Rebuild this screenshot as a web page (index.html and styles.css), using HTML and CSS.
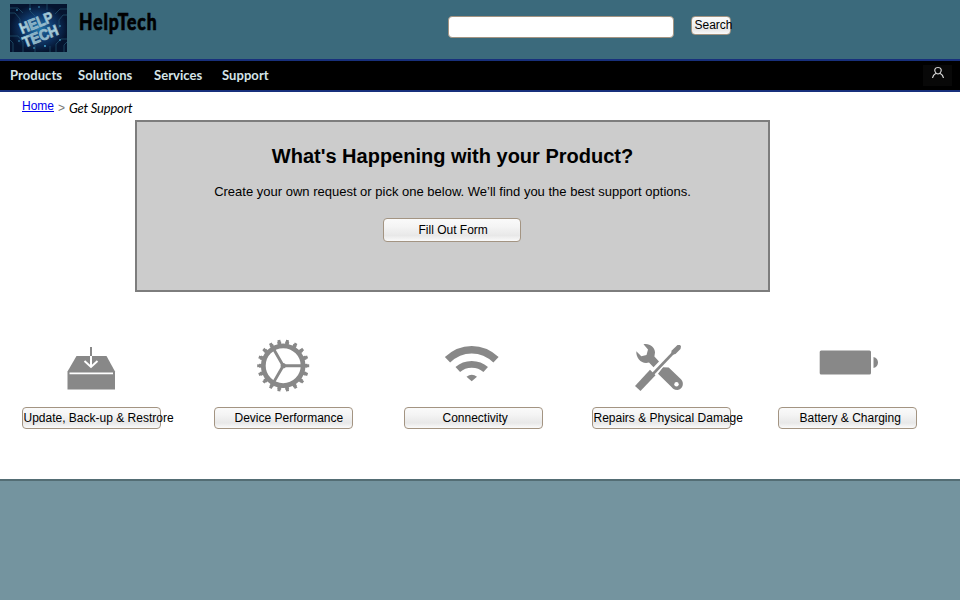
FILE: index.html
```html
<!DOCTYPE html>
<html lang="en">
<head>
<meta charset="utf-8">
<title>HelpTech - Get Support</title>
<link rel="stylesheet" href="styles.css">
</head>
<body>
<header class="header">
  <svg class="logo" viewBox="0 0 57 48">
    <defs>
      <radialGradient id="glow"><stop offset="0" stop-color="#2379ad"/><stop offset=".5" stop-color="#103c70"/><stop offset="1" stop-color="#05142f"/></radialGradient>
      <linearGradient id="metal" x2="1" y2="0"><stop offset="0" stop-color="#d5eef3"/><stop offset=".35" stop-color="#7ba7bd"/><stop offset="1" stop-color="#b9dce8"/></linearGradient>
    </defs>
    <rect width="57" height="48" fill="url(#glow)"/>
    <g fill="none" stroke="#245674" stroke-width=".7">
      <path d="M0 4h8l5 5M0 9h5l5 6v8M0 32h8l5 6v10M3 48v-9l-3-3M57 5h-7l-5 5M57 11h-4l-4 5v8M57 35h-6l-5 5v8M54 48v-7l3-3M20 0v7l5 5M37 0v6M25 48v-7M40 48v-6"/>
    </g>
    <g fill="#4bb6df"><circle cx="7" cy="6" r=".8"/><circle cx="20" cy="5" r=".8"/><circle cx="35" cy="42" r=".9"/><circle cx="50" cy="36" r=".8"/><circle cx="50" cy="22" r=".8"/><circle cx="9" cy="37" r=".7"/><circle cx="24" cy="44" r=".8"/><circle cx="29" cy="3" r=".7"/></g>
    <g class="logo-text" fill="url(#metal)" stroke="#8fb6c8" stroke-width=".9">
      <text x="0" y="0" textLength="35" lengthAdjust="spacingAndGlyphs" transform="translate(12 30) rotate(-22)">HELP</text>
      <text x="0" y="0" textLength="37" lengthAdjust="spacingAndGlyphs" transform="translate(15 43.500) rotate(-21)">TECH</text>
    </g>
  </svg>
  <div class="brand">HelpTech</div>
  <input class="search-input" type="text" aria-label="Search">
  <button class="button search-button">Search</button>
</header>
<nav class="nav">
  <a class="nav-link products">Products</a>
  <a class="nav-link solutions">Solutions</a>
  <a class="nav-link services">Services</a>
  <a class="nav-link support">Support</a>
  <div class="account"><svg viewBox="0 0 14 14" width="14" height="14"><path d="M1.500 12C2 9.500 3.400 8 5 7.200C2.400 4.400 4 1.500 7 1.500s4.600 2.900 2 5.700C10.600 8 12 9.500 12.500 12M5 7.200q2 1.300 4 0" fill="none" stroke="#d5d5d5" stroke-width="1.200"/></svg></div>
</nav>
<main class="main">
  <div class="breadcrumb"><a class="home" href="#">Home</a><span class="separator">&gt;</span><span class="current">Get Support</span></div>
  <section class="panel">
    <h1 class="title">What's Happening with your Product?</h1>
    <p class="intro">Create your own request or pick one below. We’ll find you the best support options.</p>
    <button class="button form-button">Fill Out Form</button>
  </section>
  <section class="topics">
    <div class="topic">
      <svg class="icon" viewBox="0 0 139 66"><path d="M54.500 26h30L93 41.500V59.500H45.500V41.500Z" fill="#888"/><path d="M69 17v9" stroke="#888" stroke-width="2"/><path d="M47.500 43.300H91" stroke="#fff" stroke-width="1.700"/><path d="M69 26v11M62.500 31l6.500 6 6.500-6" fill="none" stroke="#fff" stroke-width="2"/></svg>
      <button class="button update">Update, Back-up &amp; Restrore</button>
    </div>
    <div class="topic">
      <svg class="icon" viewBox="0 0 139 66"><g fill="none" stroke="#888"><circle cx="69.200" cy="35.700" r="19.900" stroke-width="4.800"/><circle cx="69.200" cy="35.700" r="22.700" stroke-width="3" pathLength="180" stroke-dasharray="4.800 5.200" stroke-dashoffset="2.400"/><circle cx="69.200" cy="35.700" r="24.600" stroke-width="2.800" pathLength="180" stroke-dasharray="3.400 6.600" stroke-dashoffset="1.700"/><path d="M69.200 35.700H89M69.200 35.700L59.300 18.500M69.200 35.700L59.300 52.900" stroke-width="2.900"/></g><circle cx="69.200" cy="35.700" r="2.600" fill="#888"/></svg>
      <button class="button device">Device Performance</button>
    </div>
    <div class="topic">
      <svg class="icon" viewBox="0 0 139 66"><g fill="none" stroke="#888"><path d="M43.500 29.800Q54 19.700 67.700 19.700T92 29.800" stroke-width="7.600"/><path d="M53.800 39.500Q59.500 34.300 67.700 34.300T81.700 39.500" stroke-width="6.800"/></g><path d="M62.500 46.800Q67.700 42.500 73 46.800L67.700 51.300Z" fill="#888"/></svg>
      <button class="button connectivity">Connectivity</button>
    </div>
    <div class="topic">
      <svg class="icon" viewBox="0 0 139 66"><path d="M51.500 14.200C57 12.700 63 17 63 22.500L62.400 26.500 67 31.500 61.500 37.200 57 32.500C50 34.500 44 29 44.300 21.300L49.300 26.200 54.500 25 56 19.400Z" fill="#888"/><path d="M71 37.200L76.700 37.500 89 49.200C92.500 52.500 91 59.500 85.500 60C82 60 80.500 58 79.500 57L66 43.700Z" fill="#888"/><circle cx="84.500" cy="54.300" r="2.200" fill="#fff"/><path d="M58 47L81 23" stroke="#fff" stroke-width="5"/><path d="M59 46L82 22" stroke="#888" stroke-width="2.600"/><path d="M79.500 20.800L85.500 15 88 15 89 16.300 88.500 19 83.500 24 79.300 25Z" fill="#888"/><path d="M43 56L58 39.700 63.500 45.200 48.500 61Z" fill="#888"/></svg>
      <button class="button repairs">Repairs &amp; Physical Damage</button>
    </div>
    <div class="topic">
      <svg class="icon" viewBox="0 0 139 66"><rect x="41.700" y="20.400" width="51.300" height="24.200" rx="1.500" fill="#888"/><path d="M95.500 27C101.500 28 101.500 37 95.500 38Z" fill="#888"/></svg>
      <button class="button battery">Battery &amp; Charging</button>
    </div>
  </section>
</main>
<footer class="footer"></footer>
</body>
</html>
```
FILE: styles.css
```css
* { box-sizing: border-box; }
body { margin: 0; font-family: "Liberation Sans", Arial, sans-serif; color: #000; background: #fff; }
.header { display: flex; align-items: flex-start; height: 59px; padding: 4px 0 0 10px; background: #3b6a7c; }
.logo { width: 57px; height: 48px; flex: none; }
.logo-text { font: bold 15px "Liberation Sans", sans-serif; }
.brand { width: 370px; margin: 3px 0 0 12px; font: 900 23px/28px Lato, sans-serif; transform: scaleX(.76); transform-origin: left; flex: none; letter-spacing: 1.2px; -webkit-text-stroke: .7px #000; }
.search-input { width: 226px; height: 22px; margin: 12px 17px 0 -1px; border: 1px solid #a39482; border-radius: 4px; background: #fff; flex: none; }
.button { display: block; border: 1px solid #a39482; border-radius: 4px; padding: 0; background: linear-gradient(#fafafa, #f4f4f4 35%, #e8e8e8 75%, #fafafa); font: 12px/14px "Liberation Sans", Arial, sans-serif; color: #000; text-align: left; white-space: nowrap; }
.search-button { width: 40px; height: 19px; margin-top: 12px; padding: 0 0 2px 2.5px; }
.nav { display: flex; height: 33px; padding-left: 10px; border-top: 2px solid #18307c; border-bottom: 2px solid #18307c; background: #000; }
.nav-link { font: bold 13px/28px Lato, sans-serif; color: #d5e4e8; white-space: nowrap; letter-spacing: .06px; }
.products { width: 68px; }
.solutions { width: 76px; }
.services { width: 68px; }
.support { width: 60px; }
.account { display: flex; justify-content: center; width: 29px; height: 21px; margin: 4px 8px 0 auto; padding-top: 1px; background: #080808; }
.main { height: 387px; overflow: hidden; }
.breadcrumb { display: flex; height: 28px; padding: 7px 0 0 22px; font-size: 12px; line-height: 14px; }
.home { color: #0000ee; }
.separator { width: 11px; margin: 2px 0 0 4px; color: #777; font-size: 12px; }
.current { margin-top: 1px; font: italic 13px/16px Lato, sans-serif; letter-spacing: -.2px; }
.panel { display: flex; flex-direction: column; align-items: center; width: 635px; height: 172px; margin-left: 135px; padding-top: 22px; border: 2px solid #7d7d7d; background: #ccc; }
.title { margin: 0; font-size: 20px; line-height: 24px; }
.intro { margin: 16px 0 18px; font-size: 13px; line-height: 16px; white-space: nowrap; }
.form-button { width: 138px; height: 24px; padding-left: 34.5px; margin-right: 1px; }
.topics { display: grid; grid-template-columns: 192px 190px 188px 186px 139px; margin: 38px 0 0 22px; }
.topic { width: 139px; }
.icon { display: block; width: 139px; height: 66px; margin-bottom: 11px; }
.topic .button { width: 139px; height: 22px; }
.topic .update { padding-left: .5px; }
.topic .device { padding-left: 19.5px; }
.topic .connectivity { padding-left: 37.5px; }
.topic .repairs { padding-left: .5px; }
.topic .battery { padding-left: 20.5px; }
.footer { height: 121px; border-top: 2px solid #536d74; background: #74949f; }
```
